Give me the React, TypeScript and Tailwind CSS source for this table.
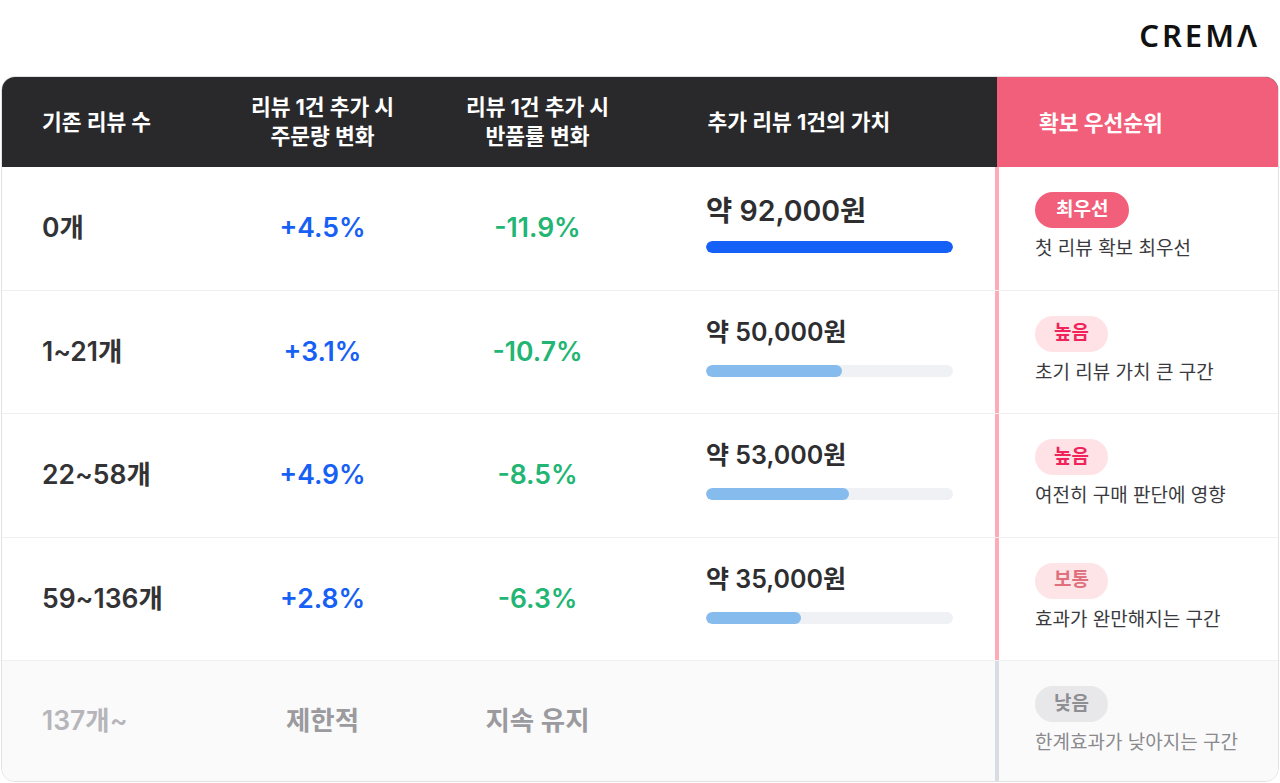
import React from "react";

type Row = {
  count: string;
  order: string;
  ret: string;
  value: string;
  pct: number;
  big?: boolean;
  badge: string;
  badgeCls: string;
  desc: string;
};

const rows: Row[] = [
  { count: "0개", order: "+4.5%", ret: "-11.9%", value: "약 92,000원", pct: 100, big: true, badge: "최우선", badgeCls: "bg-[#f25f7a] text-white px-[21px]", desc: "첫 리뷰 확보 최우선" },
  { count: "1~21개", order: "+3.1%", ret: "-10.7%", value: "약 50,000원", pct: 55, badge: "높음", badgeCls: "bg-[#ffe2e6] text-[#f0245a] px-[19px]", desc: "초기 리뷰 가치 큰 구간" },
  { count: "22~58개", order: "+4.9%", ret: "-8.5%", value: "약 53,000원", pct: 58, badge: "높음", badgeCls: "bg-[#ffe2e6] text-[#f0245a] px-[19px]", desc: "여전히 구매 판단에 영향" },
  { count: "59~136개", order: "+2.8%", ret: "-6.3%", value: "약 35,000원", pct: 38.5, badge: "보통", badgeCls: "bg-[#fde4e7] text-[#e0707e] px-[19px]", desc: "효과가 완만해지는 구간" },
];

const font = { fontFamily: 'Inter, "Noto Sans CJK KR", sans-serif' };

export default function App() {
  return (
    <div className="w-[1280px] h-[783px] bg-white overflow-hidden" style={font}>
      <div className="h-[76px] flex justify-end items-start pr-[20px] pt-[16px]">
        <span
          className="text-[31px] leading-[38px] font-semibold tracking-[3px] text-[#111]"
          style={{ fontFamily: '"Noto Sans", "DejaVu Sans", sans-serif' }}
        >
          CREMΛ
        </span>
      </div>
      <div className="mx-px border border-[#e2e2e4] rounded-[14px] overflow-hidden">
        {/* header */}
        <div className="flex h-[90px] bg-[#29292c] text-white text-[21.5px] font-bold leading-[29px]">
          <div className="w-[213px] flex items-center pl-[40px]">기존 리뷰 수</div>
          <div className="w-[215px] flex items-center justify-center text-center">
            리뷰 1건 추가 시<br />주문량 변화
          </div>
          <div className="w-[215px] flex items-center justify-center text-center">
            리뷰 1건 추가 시<br />반품률 변화
          </div>
          <div className="w-[352px] flex items-center justify-center pr-[44px]">추가 리뷰 1건의 가치</div>
          <div className="flex-1 flex items-center pl-[42px] bg-[#f25f7a] pt-[3px]">확보 우선순위</div>
        </div>
        {rows.map((r, i) => (
          <div key={i} className="flex h-[123.5px] border-b border-[#f0f0f2] bg-white">
            <div className="w-[213px] flex items-center pl-[40px] text-[26.5px] font-semibold text-[#333336]">
              {r.count}
            </div>
            <div className="w-[215px] flex items-center justify-center text-[26.5px] font-semibold text-[#1660f5]">
              {r.order}
            </div>
            <div className="w-[215px] flex items-center justify-center text-[26.5px] font-semibold text-[#22b573]">
              {r.ret}
            </div>
            <div className="w-[350px] flex flex-col pl-[61px] pr-[42px]">
              {r.big ? (
                <div className="mt-[27px] text-[28.5px] leading-[34px] font-semibold text-[#2e2e31]">{r.value}</div>
              ) : (
                <div className="mt-[26px] text-[25px] leading-[30px] font-semibold text-[#2e2e31]">{r.value}</div>
              )}
              <div className={`${r.big ? "mt-[13px]" : "mt-[18px]"} h-[12px] w-[247px] rounded-full bg-[#eff1f5] overflow-hidden`}>
                <div
                  className={`h-full rounded-full ${r.big ? "bg-[#1560f6]" : "bg-[#86bbee]"}`}
                  style={{ width: `${r.pct}%` }}
                />
              </div>
            </div>
            <div className="flex-1 border-l-4 border-[#ffabb6] pl-[36px] pt-[25px] flex flex-col items-start">
              <span className={`h-[36px] rounded-full flex items-center text-[19px] font-bold ${r.badgeCls}`}>
                {r.badge}
              </span>
              <span className="mt-[8px] text-[19px] leading-[26px] text-[#3a3a3e]">{r.desc}</span>
            </div>
          </div>
        ))}
        {/* last row */}
        <div className="flex h-[120px] bg-[#fafafa]">
          <div className="w-[213px] flex items-center pl-[40px] text-[26.5px] font-semibold text-[#b5b5ba]">137개~</div>
          <div className="w-[215px] flex items-center justify-center text-[26.5px] font-semibold text-[#9a9a9f]">제한적</div>
          <div className="w-[215px] flex items-center justify-center text-[26.5px] font-semibold text-[#9a9a9f]">지속 유지</div>
          <div className="w-[350px]" />
          <div className="flex-1 border-l-4 border-[#dadce3] pl-[36px] pt-[25px] flex flex-col items-start">
            <span className="h-[36px] px-[19px] rounded-full flex items-center text-[19px] font-bold bg-[#e8e8ea] text-[#8e8e93]">
              낮음
            </span>
            <span className="mt-[8px] text-[19px] leading-[26px] text-[#8a8a8e]">한계효과가 낮아지는 구간</span>
          </div>
        </div>
      </div>
    </div>
  );
}
